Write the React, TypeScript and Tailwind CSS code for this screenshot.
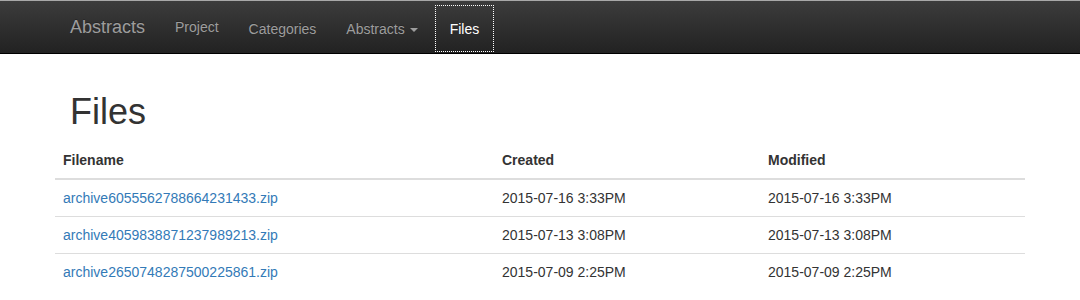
const files = [
  { name: "archive6055562788664231433.zip", created: "2015-07-16 3:33PM", modified: "2015-07-16 3:33PM" },
  { name: "archive4059838871237989213.zip", created: "2015-07-13 3:08PM", modified: "2015-07-13 3:08PM" },
  { name: "archive2650748287500225861.zip", created: "2015-07-09 2:25PM", modified: "2015-07-09 2:25PM" },
];

const App = () => {
  return (
    <div className="min-h-[300px] bg-white text-[14px] text-[#333] font-['Liberation_Sans',Arial,sans-serif]">
      {/* NAVBAR */}
      <nav className="h-[54px] border-t border-t-[#a8a8a8] border-b border-b-black bg-gradient-to-b from-[#3c3c3c] to-[#222]">
        <div className="mx-auto flex h-[52px] w-[970px] px-[15px]">
          <a className="flex h-[52px] items-center pr-[15px] text-[18px] leading-[20px] text-[#9d9d9d] [text-shadow:0_-1px_0_rgba(0,0,0,0.25)]">
            Abstracts
          </a>
          <a className="flex h-[52px] items-center px-[15px] leading-[20px] text-[#9d9d9d] [text-shadow:0_-1px_0_rgba(0,0,0,0.25)]">
            Project
          </a>
          <a className="mt-[4px] flex h-[47px] items-center px-[15px] leading-[20px] text-[#9d9d9d] [text-shadow:0_-1px_0_rgba(0,0,0,0.25)]">
            Categories
          </a>
          <a className="mt-[4px] flex h-[47px] items-center pl-[15px] pr-[17px] leading-[20px] text-[#9d9d9d] [text-shadow:0_-1px_0_rgba(0,0,0,0.25)]">
            Abstracts
            <span className="ml-[5px] mt-[2px] inline-block h-0 w-0 border-x-[4px] border-t-[4px] border-x-transparent border-t-[#9d9d9d]" />
          </a>
          <a className="mt-[4px] flex h-[47px] items-center border border-dotted border-white px-[14px] leading-[20px] text-white">
            Files
          </a>
        </div>
      </nav>

      {/* CONTENT */}
      <div className="mx-auto w-[970px] px-[15px]">
        <h1 className="mt-[38px] mb-[10px] text-[36px] leading-[40px] font-normal text-[#333]">Files</h1>
        <div className="-mx-[15px]">
          <table className="w-full border-collapse text-left">
            <thead>
              <tr className="border-b-2 border-b-[#ddd]">
                <th className="w-[439px] px-[8px] py-[8px] leading-[20px] font-bold">Filename</th>
                <th className="w-[266px] px-[8px] py-[8px] leading-[20px] font-bold">Created</th>
                <th className="px-[8px] py-[8px] leading-[20px] font-bold">Modified</th>
              </tr>
            </thead>
            <tbody>
              {files.map((f, i) => (
                <tr key={f.name} className={i > 0 ? "border-t border-t-[#ddd]" : ""}>
                  <td className="px-[8px] py-[8px] leading-[20px]">
                    <a className="text-[#337ab7]">{f.name}</a>
                  </td>
                  <td className="px-[8px] py-[8px] leading-[20px]">{f.created}</td>
                  <td className="px-[8px] py-[8px] leading-[20px]">{f.modified}</td>
                </tr>
              ))}
            </tbody>
          </table>
        </div>
      </div>
    </div>
  );
};

export default App;
